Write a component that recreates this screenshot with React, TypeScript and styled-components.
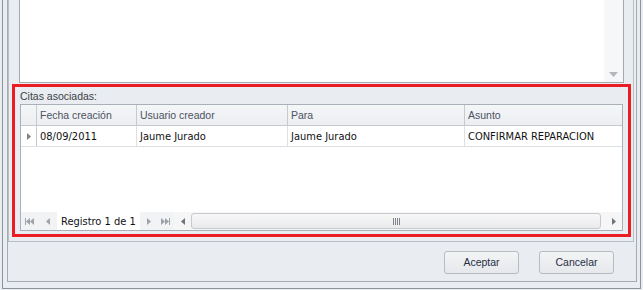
import styled, { createGlobalStyle } from "styled-components"

const GlobalStyle = createGlobalStyle`
    html, body {
        margin: 0;
        padding: 0;
        background: #e9ecf0;
    }
    * {
        box-sizing: border-box;
    }
`

const Shell = styled.div`
    width: 643px;
    height: 290px;
    padding: 0 2px 1px 2px;
    background: #e9ecf0;
    display: flex;
    font-family: "Liberation Sans", Arial, sans-serif;
`

const Outer = styled.div`
    flex: 1;
    display: flex;
    border: 1px solid #8d939a;
    border-top: none;
    padding: 0 3px 6px 4px;
`

const Frame = styled.div`
    flex: 1;
    display: flex;
    flex-direction: column;
    border: 1px solid #a6abb1;
    border-top: none;
`

const Group = styled.div`
    display: flex;
    flex-direction: column;
    margin-right: 2px;
    padding: 0 2px 4px 3px;
    border-left: 1px solid #b9bec4;
    border-right: 1px solid #b9bec4;
    border-bottom: 1px solid #b9bec4;
`

const ListBox = styled.div`
    height: 83px;
    margin: 0 7px 1px 7px;
    display: flex;
    border: 1px solid #a4a9af;
    border-top: none;
    background: #fff;
`

const ListArea = styled.div`
    flex: 1;
`

const VScroll = styled.div`
    width: 19px;
    background: #f6f7f8;
    display: flex;
    flex-direction: column;
    justify-content: flex-end;
    align-items: center;
    padding-bottom: 5px;
`

const Highlight = styled.div`
    height: 153px;
    border: 3px solid #ec1c24;
    display: flex;
    flex-direction: column;
    padding: 0 5px 3px 5px;
`

const Caption = styled.div`
    height: 17px;
    line-height: 17px;
    padding-top: 1px;
    font-size: 10.5px;
    color: #3b3f45;
`

const Grid = styled.div`
    flex: 1;
    display: flex;
    flex-direction: column;
    border: 1px solid #a9b0b8;
    background: #fff;
`

const Row = styled.div<{ $head?: boolean }>`
    display: grid;
    grid-template-columns: 16px 100px 151px 177px 1fr;
    height: 21px;
    background: ${p => (p.$head ? "linear-gradient(#f5f6f8, #eceef1)" : "#fff")};
    border-bottom: 1px solid ${p => (p.$head ? "#c5cad0" : "#dcdfe3")};
`

const Cell = styled.div<{ $head?: boolean }>`
    display: flex;
    align-items: center;
    padding-left: 3px;
    white-space: nowrap;
    overflow: hidden;
    font-family: ${p => (p.$head ? `"Liberation Sans", Arial, sans-serif` : `"DejaVu Sans Condensed", "DejaVu Sans", sans-serif`)};
    font-size: ${p => (p.$head ? "10.5px" : "11px")};
    color: ${p => (p.$head ? "#4b5262" : "#111")};
    border-right: 1px solid ${p => (p.$head ? "#c5cad0" : "#dcdfe3")};

    &:last-child {
        border-right: none;
    }
`

const Indicator = styled(Cell)`
    padding-left: 6px;
`

const Filler = styled.div`
    flex: 1;
`

const Navigator = styled.div`
    height: 18px;
    display: flex;
    align-items: stretch;
    background: #f2f3f5;
`

const NavButton = styled.div<{ $w: number }>`
    width: ${p => p.$w}px;
    display: flex;
    align-items: center;
    justify-content: center;
`

const NavText = styled.div`
    width: 83px;
    background: #fff;
    display: flex;
    align-items: center;
    padding-left: 4px;
    font-family: "DejaVu Sans Condensed", "DejaVu Sans", sans-serif;
    font-size: 11px;
    color: #111;
`

const HScroll = styled.div`
    flex: 1;
    display: flex;
    align-items: center;
    background: #f6f6f7;
`

const ScrollArrow = styled.div`
    width: 17px;
    display: flex;
    align-items: center;
    justify-content: center;
    align-self: stretch;
`

const Thumb = styled.div`
    flex: 1;
    height: 16px;
    margin-right: 4px;
    border: 1px solid #c6c9cd;
    border-radius: 3px;
    background: linear-gradient(#f7f7f8, #e9eaec);
    display: flex;
    align-items: center;
    justify-content: center;
`

const Footer = styled.div`
    flex: 1;
    display: flex;
    align-items: center;
    justify-content: flex-end;
    gap: 20px;
    padding: 1px 22px 0 0;
`

const Button = styled.div`
    width: 75px;
    height: 23px;
    border: 1px solid #b7bcc3;
    border-radius: 3px;
    background: linear-gradient(#f3f4f6, #e6e8eb);
    display: flex;
    align-items: center;
    justify-content: center;
    font-size: 10.5px;
    color: #1f2f44;
`

const Gray = "#9ea3a9"

const FirstIcon = () => (
    <svg width="9" height="7" viewBox="0 0 9 7">
        <rect x="0" y="0" width="1" height="7" fill={Gray} />
        <path d="M1 3.5 L5 0 V7 Z M5 3.5 L9 0 V7 Z" fill={Gray} />
    </svg>
)

const PrevIcon = ({ color = Gray }: { color?: string }) => (
    <svg width="4" height="7" viewBox="0 0 4 7">
        <path d="M0 3.5 L4 0 V7 Z" fill={color} />
    </svg>
)

const NextIcon = ({ color = Gray }: { color?: string }) => (
    <svg width="4" height="7" viewBox="0 0 4 7">
        <path d="M4 3.5 L0 0 V7 Z" fill={color} />
    </svg>
)

const LastIcon = () => (
    <svg width="9" height="7" viewBox="0 0 9 7">
        <path d="M4 3.5 L0 0 V7 Z M8 3.5 L4 0 V7 Z" fill={Gray} />
        <rect x="8" y="0" width="1" height="7" fill={Gray} />
    </svg>
)

const DownIcon = () => (
    <svg width="9" height="5" viewBox="0 0 9 5">
        <path d="M0 0 H9 L4.5 5 Z" fill="#b3b6ba" />
    </svg>
)

const Grip = () => (
    <svg width="7" height="7" viewBox="0 0 7 7">
        {[0, 2, 4, 6].map(x => (
            <rect key={x} x={x} y="0" width="1" height="7" fill="#7f848a" />
        ))}
    </svg>
)

const columns = ["Fecha creación", "Usuario creador", "Para", "Asunto"]
const rows = [["08/09/2011", "Jaume Jurado", "Jaume Jurado", "CONFIRMAR REPARACION"]]

const App = () => {
    return (
        <>
            <GlobalStyle />
            <Shell>
                <Outer>
                    <Frame>
                        <Group>
                            <ListBox>
                                <ListArea />
                                <VScroll>
                                    <DownIcon />
                                </VScroll>
                            </ListBox>
                            <Highlight>
                                <Caption>Citas asociadas:</Caption>
                                <Grid>
                                    <Row $head>
                                        <Cell $head />
                                        {columns.map(c => (
                                            <Cell $head key={c}>{c}</Cell>
                                        ))}
                                    </Row>
                                    {rows.map((r, i) => (
                                        <Row key={i}>
                                            <Indicator $head>
                                                <NextIcon color="#7d8288" />
                                            </Indicator>
                                            {r.map((v, j) => (
                                                <Cell key={j}>{v}</Cell>
                                            ))}
                                        </Row>
                                    ))}
                                    <Filler />
                                    <Navigator>
                                        <NavButton $w={17}><FirstIcon /></NavButton>
                                        <NavButton $w={19}><PrevIcon /></NavButton>
                                        <NavText>Registro 1 de 1</NavText>
                                        <NavButton $w={17}><NextIcon /></NavButton>
                                        <NavButton $w={17}><LastIcon /></NavButton>
                                        <HScroll>
                                            <ScrollArrow><PrevIcon color="#6f747a" /></ScrollArrow>
                                            <Thumb><Grip /></Thumb>
                                            <ScrollArrow><NextIcon color="#6f747a" /></ScrollArrow>
                                        </HScroll>
                                    </Navigator>
                                </Grid>
                            </Highlight>
                        </Group>
                        <Footer>
                            <Button>Aceptar</Button>
                            <Button>Cancelar</Button>
                        </Footer>
                    </Frame>
                </Outer>
            </Shell>
        </>
    )
}

export default App
